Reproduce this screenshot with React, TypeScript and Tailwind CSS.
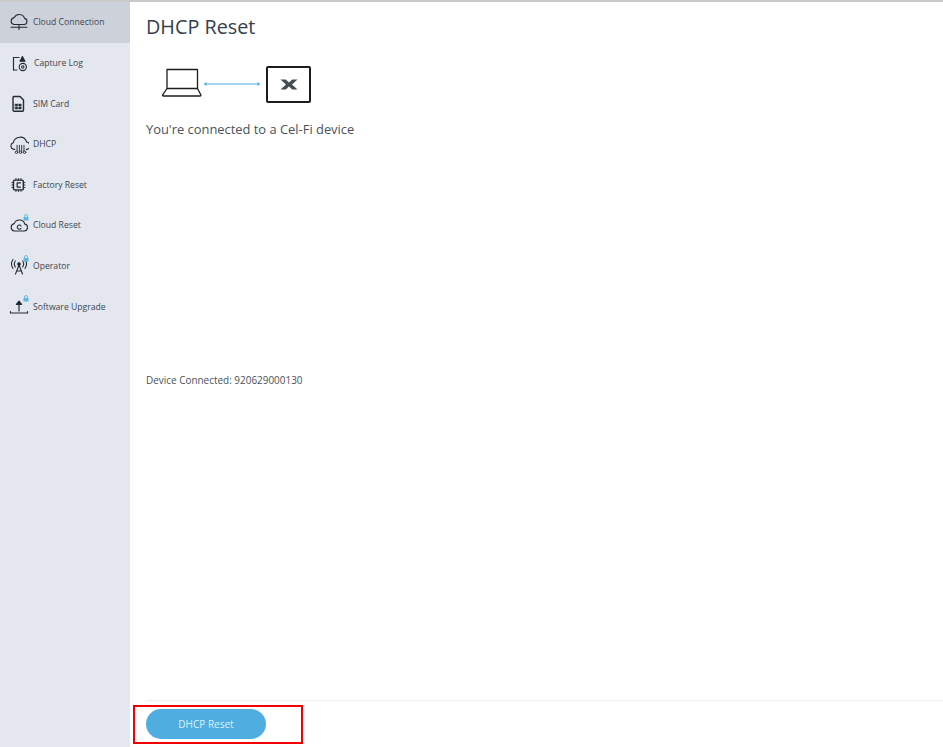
import React from "react";

const S = { fill: "none", stroke: "#222a33", strokeWidth: 1.1, strokeLinecap: "round" as const, strokeLinejoin: "round" as const };

const Lock = () => (
  <svg width="6" height="7" viewBox="0 0 6 7" className="absolute -top-[1px] right-[0px]">
    <path d="M1.5 3V2a1.5 1.5 0 0 1 3 0v1" fill="none" stroke="#5cb8e8" strokeWidth="0.9" />
    <rect x="0.5" y="3" width="5" height="3.6" rx="0.6" fill="#5cb8e8" />
  </svg>
);

const icons: Record<string, React.ReactNode> = {
  cloud: (
    <svg width="20" height="20" viewBox="0 0 20 20" {...S}>
      <path d="M5 12.5h10a3.1 3.1 0 0 0 .6-6.1A5.6 5.6 0 0 0 5.2 5.6 3.5 3.5 0 0 0 5 12.5Z" />
      <path d="M10 14v3.5M2 15h16M2 17.5h16" strokeWidth="0" />
      <path d="M10 13v4.5M2 15.2h16" />
    </svg>
  ),
  capture: (
    <svg width="20" height="20" viewBox="0 0 20 20" {...S}>
      <path d="M10 4.5H4.5V17H8" strokeDasharray="1.6 0.9" />
      <path d="M4.5 4.5V17" />
      <path d="M11 8.2l2.4-4.6L16 8.2Z" fill="#222a33" />
      <circle cx="13.8" cy="14" r="3.6" />
      <circle cx="13.8" cy="14" r="1.2" />
    </svg>
  ),
  sim: (
    <svg width="20" height="20" viewBox="0 0 20 20" {...S} strokeWidth="1.4">
      <path d="M5 3.5h6l3.5 3.5v10a1.3 1.3 0 0 1-1.3 1.3H5.3A1.3 1.3 0 0 1 4 17V4.5a1 1 0 0 1 1-1Z" />
      <rect x="6.2" y="11" width="6" height="5" fill="#222a33" strokeWidth="0.4" />
      <path d="M9.2 11v5M6.2 13.5h6" stroke="#e4e7ed" strokeWidth="0.6" />
    </svg>
  ),
  dhcp: (
    <svg width="20" height="20" viewBox="0 0 20 20" {...S} strokeWidth="0.95">
      <g transform="translate(0.6 0.4) scale(1.15)">
        <path d="M4.5 13H3.8a3 3 0 0 1-.6-5.8 6 6 0 0 1 11.6-.6 3.3 3.3 0 0 1 .6 6.4h-.9" />
        <path d="M6.5 9.5v5M8.5 9.5v5M10.5 9.5v5M12.5 9.5v5" strokeWidth="0.8" />
        <circle cx="6" cy="15.5" r="1.1" strokeWidth="0.8" />
        <circle cx="9.5" cy="15.5" r="1.1" strokeWidth="0.8" />
        <circle cx="13" cy="15.5" r="1.1" strokeWidth="0.8" />
      </g>
    </svg>
  ),
  factory: (
    <svg width="20" height="20" viewBox="0 0 20 20" {...S}>
      <g transform="translate(1.2 1.8) scale(0.82)">
        <rect x="4" y="4" width="12" height="12" rx="1.5" strokeWidth="1.7" />
        <path d="M7 2v2M10 2v2M13 2v2M7 16v2M10 16v2M13 16v2M2 7h2M2 10h2M2 13h2M16 7h2M16 10h2M16 13h2" />
        <path d="M12.5 7.5h-4v5h4" strokeWidth="1.5" />
      </g>
    </svg>
  ),
  cloudReset: (
    <svg width="20" height="20" viewBox="0 0 20 20" {...S}>
      <path d="M5 16h10a3.5 3.5 0 0 0 .8-6.9A5.6 5.6 0 0 0 5.2 8.6 3.8 3.8 0 0 0 5 16Z" />
      <path d="M12 10.8a2.1 2.1 0 1 0 0 2.6" />
    </svg>
  ),
  operator: (
    <svg width="20" height="20" viewBox="0 0 20 20" {...S}>
      <circle cx="10" cy="8" r="1.3" fill="#222a33" />
      <path d="M6.5 18 10 9l3.5 9M7.6 15h4.8" />
      <path d="M6.4 5a5 5 0 0 0 0 6M13.6 5a5 5 0 0 1 0 6M4 3.5a8 8 0 0 0 0 9M16 3.5a8 8 0 0 1 0 9" />
    </svg>
  ),
  upgrade: (
    <svg width="20" height="20" viewBox="0 0 20 20" {...S}>
      <path d="M10 15V6" strokeWidth="1.2" />
      <path d="M7.4 8.4 10 5l2.6 3.4Z" fill="#222a33" />
      <path d="M1.5 15.5v1.5h17v-1.5" strokeWidth="1.2" />
    </svg>
  ),
};

const items = [
  { label: "Cloud Connection", icon: "cloud", active: true },
  { label: "Capture Log", icon: "capture", indent: true },
  { label: "SIM Card", icon: "sim" },
  { label: "DHCP", icon: "dhcp" },
  { label: "Factory Reset", icon: "factory" },
  { label: "Cloud Reset", icon: "cloudReset", lock: true },
  { label: "Operator", icon: "operator", lock: true },
  { label: "Software Upgrade", icon: "upgrade", lock: true },
];

export default function App() {
  return (
    <div className="relative flex flex-col w-[943px] h-[747px] overflow-hidden bg-white font-['Open_Sans','Noto_Sans',sans-serif]">
      <div className="h-[2px] shrink-0 bg-[#c9c9c9]" />
      <div className="flex flex-1 min-h-0">
        <nav className="w-[130px] shrink-0 bg-[#e4e7ed]">
          {items.map((it) => (
            <div
              key={it.label}
              className={`flex items-center h-[40.6px] pl-[9px] ${it.active ? "bg-[#ccd1da]" : ""}`}
            >
              <span className="relative w-[20px] h-[20px] shrink-0">
                {icons[it.icon]}
                {it.lock && <Lock />}
              </span>
              <span className={`${it.indent ? "ml-[5px]" : "ml-[4px]"} pt-[1px] text-[8.65px] leading-none text-[#3c4650] whitespace-nowrap`}>
                {it.label}
              </span>
            </div>
          ))}
        </nav>
        <main className="flex-1 min-w-0 flex flex-col">
          <div className="flex-1 min-h-0 flex flex-col pl-[16px]">
            <h1 className="mt-[11px] text-[19.8px] leading-[27px] text-[#36404a] font-normal">DHCP Reset</h1>
            <div className="mt-[25px] ml-[15px] flex items-center h-[38px]">
              <svg width="42" height="32" viewBox="0 0 42 32" className="shrink-0" fill="none" stroke="#1c1c1c" strokeWidth="1.3" strokeLinejoin="round">
                <path d="M6 1.5h30.5v19H6Z" />
                <path d="M6 20.5 1.7 26.8c-.4.7 0 1.2.8 1.2h36.5c.8 0 1.2-.5.8-1.2L36.5 20.5" />
              </svg>
              <svg width="58" height="6" viewBox="0 0 58 6" className="shrink-0">
                <path d="M2 3h54" stroke="#4fb0e2" strokeWidth="1.1" />
                <path d="M0.5 3 3.5 1v4ZM57.5 3 54.5 1v4Z" fill="#4fb0e2" />
              </svg>
              <div className="ml-[5px] w-[45px] h-[37px] shrink-0 rounded-[2px] border-2 border-[#1c1c1c] flex items-center justify-center">
                <svg width="18" height="11" viewBox="0 0 18 11">
                  <path d="M0.5 0.5h5.2l3.3 3 3.3-3h5.2L12 5.5l5.5 5h-5.2L9 7.5l-3.3 3H0.5L6 5.5Z" fill="#454b52" />
                </svg>
              </div>
            </div>
            <p className="mt-[17px] text-[12.9px] leading-[18px] text-[#4a5259]">You're connected to a Cel-Fi device</p>
            <p className="mt-[235px] text-[9.95px] leading-[14px] text-[#4a5259]">Device Connected: 920629000130</p>
          </div>
          <div className="h-[47px] shrink-0 ml-[16px] border-t border-[#f0f0f0] flex items-start pt-[8px]">
            <button className="w-[120px] h-[30px] rounded-full bg-[#4fade0] text-[10px] text-[#dff1fb]">DHCP Reset</button>
          </div>
        </main>
      </div>
      <div className="absolute left-[133px] top-[705px] w-[170px] h-[39px] border-2 border-[#f00000]" />
    </div>
  );
}
